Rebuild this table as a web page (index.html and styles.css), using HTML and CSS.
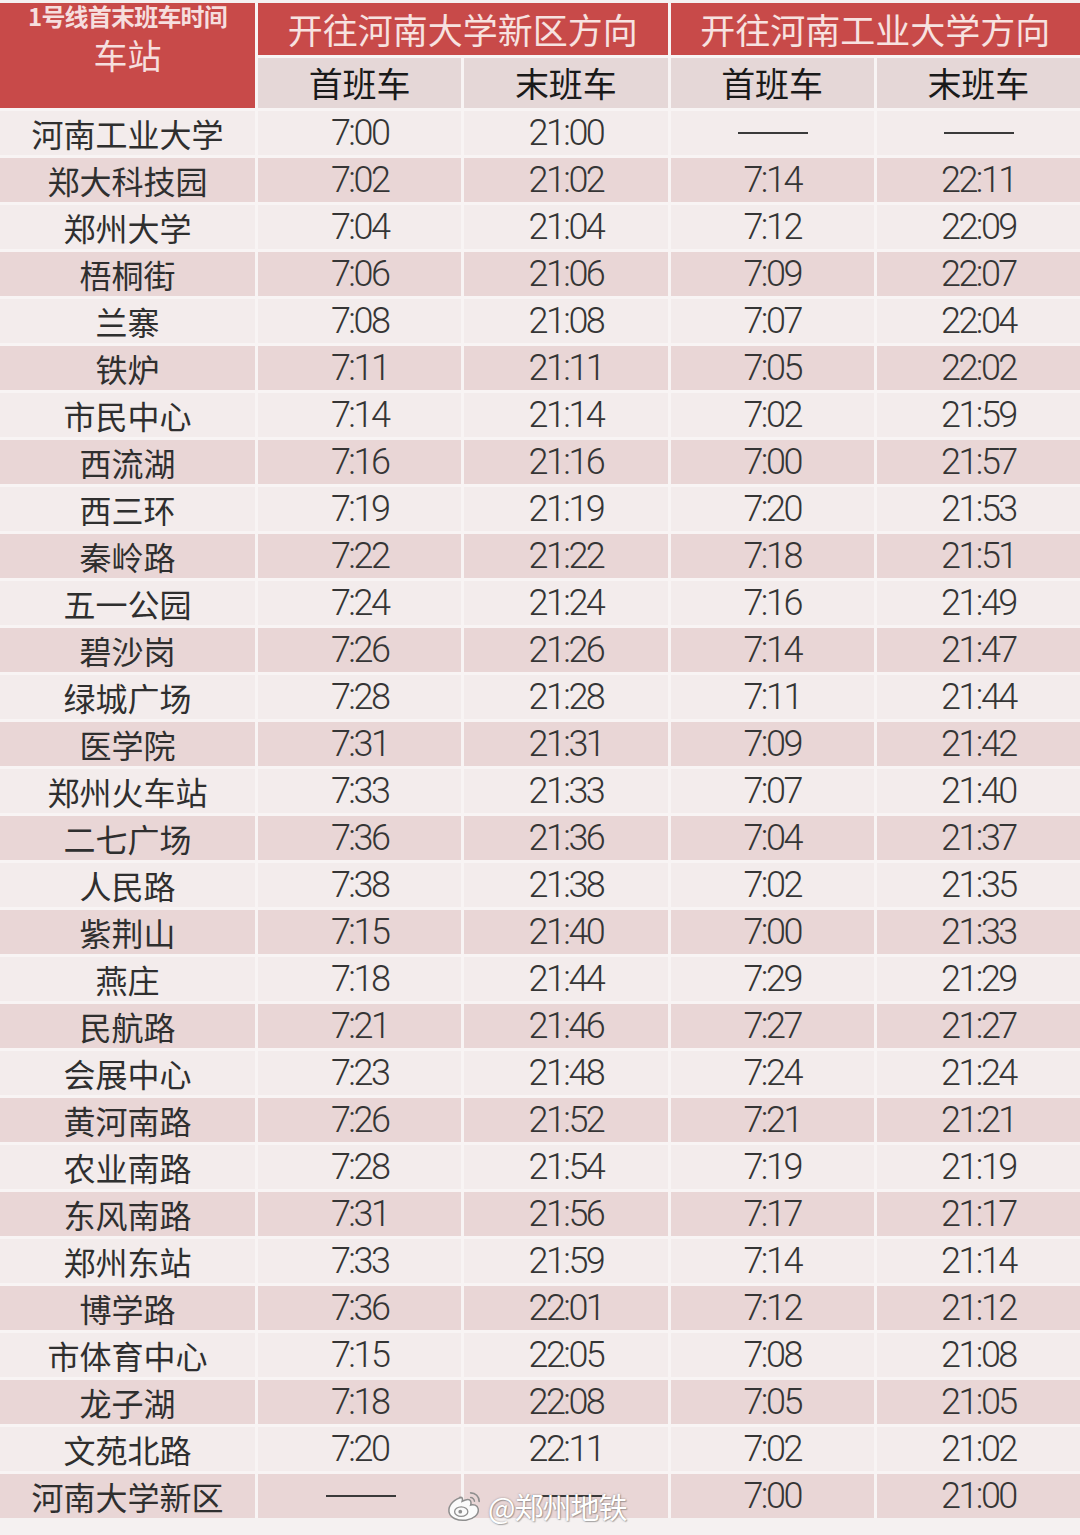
FILE: index.html
```html
<!DOCTYPE html>
<html lang="zh-CN">
<head>
<meta charset="utf-8">
<title>1号线首末班车时间</title>
<link rel="stylesheet" href="styles.css">
</head>
<body>
<div class="page">
  <div class="table">
    <div class="corner">
      <span class="caption">1号线首末班车时间</span>
      <span class="station-head">车站</span>
    </div>
    <div class="dir">开往河南大学新区方向</div>
    <div class="dir">开往河南工业大学方向</div>
    <div class="sub">首班车</div>
    <div class="sub">末班车</div>
    <div class="sub">首班车</div>
    <div class="sub">末班车</div>

    <div class="st a">河南工业大学</div><div class="t a">7:00</div><div class="t a">21:00</div><div class="t a"><span class="dash"></span></div><div class="t a"><span class="dash"></span></div>
    <div class="st b">郑大科技园</div><div class="t b">7:02</div><div class="t b">21:02</div><div class="t b">7:14</div><div class="t b">22:11</div>
    <div class="st a">郑州大学</div><div class="t a">7:04</div><div class="t a">21:04</div><div class="t a">7:12</div><div class="t a">22:09</div>
    <div class="st b">梧桐街</div><div class="t b">7:06</div><div class="t b">21:06</div><div class="t b">7:09</div><div class="t b">22:07</div>
    <div class="st a">兰寨</div><div class="t a">7:08</div><div class="t a">21:08</div><div class="t a">7:07</div><div class="t a">22:04</div>
    <div class="st b">铁炉</div><div class="t b">7:11</div><div class="t b">21:11</div><div class="t b">7:05</div><div class="t b">22:02</div>
    <div class="st a">市民中心</div><div class="t a">7:14</div><div class="t a">21:14</div><div class="t a">7:02</div><div class="t a">21:59</div>
    <div class="st b">西流湖</div><div class="t b">7:16</div><div class="t b">21:16</div><div class="t b">7:00</div><div class="t b">21:57</div>
    <div class="st a">西三环</div><div class="t a">7:19</div><div class="t a">21:19</div><div class="t a">7:20</div><div class="t a">21:53</div>
    <div class="st b">秦岭路</div><div class="t b">7:22</div><div class="t b">21:22</div><div class="t b">7:18</div><div class="t b">21:51</div>
    <div class="st a">五一公园</div><div class="t a">7:24</div><div class="t a">21:24</div><div class="t a">7:16</div><div class="t a">21:49</div>
    <div class="st b">碧沙岗</div><div class="t b">7:26</div><div class="t b">21:26</div><div class="t b">7:14</div><div class="t b">21:47</div>
    <div class="st a">绿城广场</div><div class="t a">7:28</div><div class="t a">21:28</div><div class="t a">7:11</div><div class="t a">21:44</div>
    <div class="st b">医学院</div><div class="t b">7:31</div><div class="t b">21:31</div><div class="t b">7:09</div><div class="t b">21:42</div>
    <div class="st a">郑州火车站</div><div class="t a">7:33</div><div class="t a">21:33</div><div class="t a">7:07</div><div class="t a">21:40</div>
    <div class="st b">二七广场</div><div class="t b">7:36</div><div class="t b">21:36</div><div class="t b">7:04</div><div class="t b">21:37</div>
    <div class="st a">人民路</div><div class="t a">7:38</div><div class="t a">21:38</div><div class="t a">7:02</div><div class="t a">21:35</div>
    <div class="st b">紫荆山</div><div class="t b">7:15</div><div class="t b">21:40</div><div class="t b">7:00</div><div class="t b">21:33</div>
    <div class="st a">燕庄</div><div class="t a">7:18</div><div class="t a">21:44</div><div class="t a">7:29</div><div class="t a">21:29</div>
    <div class="st b">民航路</div><div class="t b">7:21</div><div class="t b">21:46</div><div class="t b">7:27</div><div class="t b">21:27</div>
    <div class="st a">会展中心</div><div class="t a">7:23</div><div class="t a">21:48</div><div class="t a">7:24</div><div class="t a">21:24</div>
    <div class="st b">黄河南路</div><div class="t b">7:26</div><div class="t b">21:52</div><div class="t b">7:21</div><div class="t b">21:21</div>
    <div class="st a">农业南路</div><div class="t a">7:28</div><div class="t a">21:54</div><div class="t a">7:19</div><div class="t a">21:19</div>
    <div class="st b">东风南路</div><div class="t b">7:31</div><div class="t b">21:56</div><div class="t b">7:17</div><div class="t b">21:17</div>
    <div class="st a">郑州东站</div><div class="t a">7:33</div><div class="t a">21:59</div><div class="t a">7:14</div><div class="t a">21:14</div>
    <div class="st b">博学路</div><div class="t b">7:36</div><div class="t b">22:01</div><div class="t b">7:12</div><div class="t b">21:12</div>
    <div class="st a">市体育中心</div><div class="t a">7:15</div><div class="t a">22:05</div><div class="t a">7:08</div><div class="t a">21:08</div>
    <div class="st b">龙子湖</div><div class="t b">7:18</div><div class="t b">22:08</div><div class="t b">7:05</div><div class="t b">21:05</div>
    <div class="st a">文苑北路</div><div class="t a">7:20</div><div class="t a">22:11</div><div class="t a">7:02</div><div class="t a">21:02</div>
    <div class="st b">河南大学新区</div><div class="t b"><span class="dash"></span></div><div class="t b"><span class="dash"></span></div><div class="t b">7:00</div><div class="t b">21:00</div>

    <div class="watermark">
      <svg class="wb-icon" viewBox="0 0 40 36" width="38" height="34">
        <path d="M17 9c-8 1-15 8-14 15 1 7 10 10 18 9 8-1 14-6 13-12-1-4-5-5-8-4 1-3 0-6-3-6-2 0-4 1-6 2 1-3 0-5-3-4z" fill="#fbfbfb" stroke="#8f8f8f" stroke-width="1.6"/>
        <ellipse cx="16" cy="24" rx="7" ry="5" fill="none" stroke="#8f8f8f" stroke-width="1.4"/>
        <circle cx="15" cy="24" r="2" fill="#8f8f8f"/>
        <path d="M26 4c5 0 9 4 9 9" fill="none" stroke="#8f8f8f" stroke-width="1.8" stroke-linecap="round"/>
        <path d="M26 9c2 0 4 2 4 4" fill="none" stroke="#8f8f8f" stroke-width="1.6" stroke-linecap="round"/>
      </svg>
      <span class="wb-text">@郑州地铁</span>
    </div>
  </div>
</div>
</body>
</html>
```

FILE: styles.css
```css
html, body {
  margin: 0;
  padding: 0;
}
body {
  background: #f5f1f1;
  width: 1080px;
  height: 1535px;
  overflow: hidden;
  font-family: "Noto Sans CJK SC", "Noto Sans", sans-serif;
}
.page {
  padding-top: 3px;
}
.table {
  position: relative;
  display: grid;
  grid-template-columns: 255px repeat(4, 1fr);
  grid-template-rows: 52px 50px repeat(30, 44px);
  gap: 3px;
  background: #f8f4f4;
}
.corner {
  grid-row: 1 / 3;
  grid-column: 1;
  background: #c84a49;
  display: flex;
  flex-direction: column;
  align-items: center;
  color: #f6dede;
}
.caption {
  font-size: 24px;
  font-weight: 700;
  line-height: 26px;
  margin-top: 0px;
  letter-spacing: -0.8px;
}
.station-head {
  font-size: 34px;
  line-height: 36px;
  margin-top: 8px;
}
.dir {
  grid-column: span 2;
  background: #c84a49;
  color: #f7e2e0;
  font-size: 35px;
  line-height: 52px;
  text-align: center;
}
.sub {
  background: #e5d7d7;
  color: #1a1a1a;
  font-size: 34px;
  font-weight: 400;
  line-height: 50px;
  text-align: center;
}
.st, .t {
  display: flex;
  align-items: center;
  justify-content: center;
  color: #2f2f2f;
}
.st {
  font-size: 32px;
}
.t {
  font-family: "Roboto", "Open Sans", sans-serif;
  font-weight: 300;
  font-size: 36px;
  letter-spacing: -2.5px;
  color: #353535;
}
.a {
  background: #f3ecec;
}
.b {
  background: #e9d6d6;
}
.dash {
  display: block;
  width: 70px;
  height: 2px;
  background: #3a3a3a;
  margin-left: 2px;
}
.watermark {
  position: absolute;
  left: 446px;
  top: 1482px;
  display: flex;
  align-items: center;
  gap: 4px;
  pointer-events: none;
}
.wb-text {
  font-size: 29px;
  color: #ffffff;
  text-shadow: 0 0 2px rgba(90, 90, 90, 0.6), 1px 1px 1px rgba(90, 90, 90, 0.4);
  letter-spacing: -1px;
}
```
